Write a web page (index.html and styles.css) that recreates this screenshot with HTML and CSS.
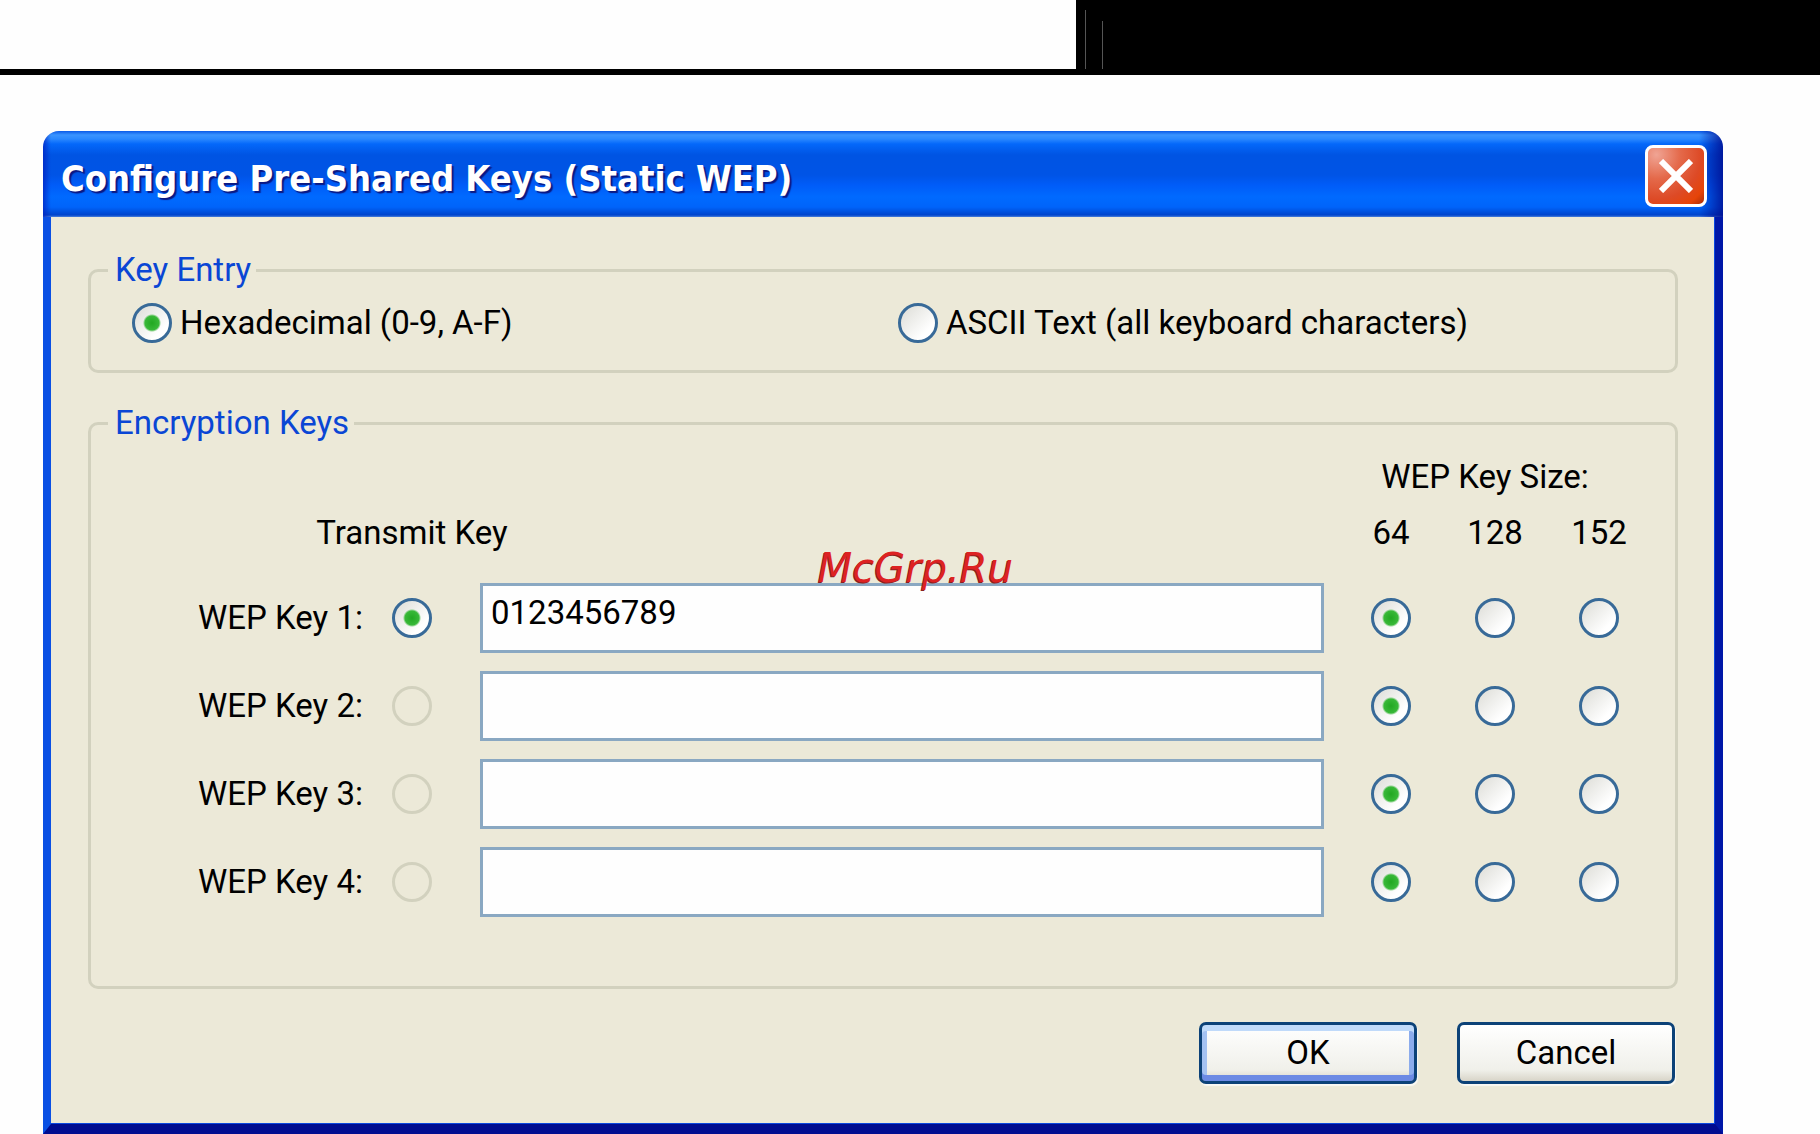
FILE: index.html
```html
<!DOCTYPE html>
<html lang="en">

<head>
    <meta charset="utf-8">
    <title>Configure Pre-Shared Keys (Static WEP)</title>
    <meta name="viewport" content="width=device-width, initial-scale=1.0" />
    <link rel="stylesheet" href="styles.css">
</head>

<body>
    <header class="page-head">
        <div class="page-tab"><span class="rule"></span><span class="rule short"></span></div>
    </header>

    <form class="dialog">
        <div class="titlebar">
            <h1>Configure Pre-Shared Keys (Static WEP)</h1>
            <button type="button" class="close" aria-label="Close">
                <svg viewBox="0 0 34 34" width="34" height="34">
                    <path d="M2 2 L32 32 M32 2 L2 32" stroke="#fff" stroke-width="6" fill="none" />
                </svg>
            </button>
        </div>

        <div class="content">
            <fieldset class="entry">
                <legend>Key Entry</legend>
                <label><input type="radio" name="entry" checked>Hexadecimal (0-9, A-F)</label>
                <label><input type="radio" name="entry">ASCII Text (all keyboard characters)</label>
            </fieldset>

            <fieldset class="keys">
                <legend>Encryption Keys</legend>
                <div class="row head">
                    <span class="size-title">WEP Key Size:</span>
                </div>
                <div class="row head">
                    <span class="transmit">Transmit Key</span>
                    <span class="size first">64</span>
                    <span class="size">128</span>
                    <span class="size">152</span>
                </div>
                <div class="row">
                    <label for="key1">WEP Key 1:</label>
                    <input type="radio" name="transmit" aria-label="Transmit key 1" checked>
                    <input type="text" id="key1" value="0123456789">
                    <input type="radio" name="size1" aria-label="64" checked>
                    <input type="radio" name="size1" aria-label="128">
                    <input type="radio" name="size1" aria-label="152">
                </div>
                <div class="row">
                    <label for="key2">WEP Key 2:</label>
                    <input type="radio" name="transmit" aria-label="Transmit key 2" disabled>
                    <input type="text" id="key2">
                    <input type="radio" name="size2" aria-label="64" checked>
                    <input type="radio" name="size2" aria-label="128">
                    <input type="radio" name="size2" aria-label="152">
                </div>
                <div class="row">
                    <label for="key3">WEP Key 3:</label>
                    <input type="radio" name="transmit" aria-label="Transmit key 3" disabled>
                    <input type="text" id="key3">
                    <input type="radio" name="size3" aria-label="64" checked>
                    <input type="radio" name="size3" aria-label="128">
                    <input type="radio" name="size3" aria-label="152">
                </div>
                <div class="row">
                    <label for="key4">WEP Key 4:</label>
                    <input type="radio" name="transmit" aria-label="Transmit key 4" disabled>
                    <input type="text" id="key4">
                    <input type="radio" name="size4" aria-label="64" checked>
                    <input type="radio" name="size4" aria-label="128">
                    <input type="radio" name="size4" aria-label="152">
                </div>
            </fieldset>

            <div class="buttons">
                <button type="submit" class="default">OK</button>
                <button type="button">Cancel</button>
            </div>
        </div>
        <span class="watermark">McGrp.Ru</span>
    </form>
</body>

</html>
```

FILE: styles.css
```css
* {
    box-sizing: border-box;
}

body {
    margin: 0;
    background-color: #fefefe;
    color: #000;
    font-family: Roboto, "Liberation Sans", sans-serif;
    font-size: 33px;
    line-height: 40px;
}

/* page header */
.page-head {
    height: 75px;
    border-bottom: 6px solid #000;
    display: flex;
    justify-content: flex-end;
}

.page-tab {
    width: 40.9%;
    background-color: #000;
    display: flex;
    align-items: flex-end;
    gap: 16px;
    padding-left: 9px;
}

.rule {
    width: 1px;
    height: 59px;
    background-color: #555;
}

.rule.short {
    height: 48px;
}

/* window */
.dialog {
    position: relative;
    margin: 56px 97px 0 43px;
}

.titlebar {
    height: 86px;
    display: flex;
    align-items: center;
    justify-content: space-between;
    padding: 4px 16px 0 18px;
    border-radius: 16px 16px 0 0;
    background:
        linear-gradient(to right, rgba(0, 30, 190, .7), transparent 8px, transparent calc(100% - 24px), rgba(0, 10, 140, .8)),
        linear-gradient(#0a5ae8 0, #3a94ff 4px, #2a88ff 8px, #0468fa 13px, #0054e3 24px, #0054e6 44px, #005cf8 54px, #006aff 66px, #0064fa 76px, #0044cc 84px, #4a80dc 86px);
}

h1 {
    margin: 0;
    padding-top: 6px;
    color: #fff;
    font-family: "DejaVu Sans Condensed", sans-serif;
    font-size: 36px;
    font-weight: bold;
    text-shadow: 2px 2px 1px #0a1883;
}

.close {
    width: 62px;
    height: 62px;
    padding: 0;
    display: flex;
    align-items: center;
    justify-content: center;
    border: 3px solid #fff;
    border-radius: 8px;
    background: radial-gradient(circle at 15% 12%, #f0a494 0, #e4694a 35%, #dd4a26 65%, #e64408 85%, #a82c08 100%);
}

.content {
    padding: 33px 37px 40px;
    border-style: solid;
    border-width: 0 8px 10px 8px;
    border-color: #0020b8 #0018a8 #000c90 #0a50e4;
    background-color: #ece9d8;
    box-shadow: inset 0 -1px 0 #0a48e0, inset -1px 0 0 #0a48e0;
}

fieldset {
    min-width: 0;
    margin: 0;
    border: 3px solid #d2d1be;
    border-radius: 10px;
}

legend {
    margin-left: 17px;
    padding: 0 5px 0 7px;
    color: #0a46d5;
}

.entry {
    display: grid;
    grid-template-columns: 1fr 1fr;
    padding: 13px 52px 27px 0;
}

.entry label {
    display: flex;
    align-items: center;
    gap: 8px;
    margin-left: 41px;
    margin-right: -41px;
}

.keys {
    margin-top: 30px;
    padding: 14px 24px 69px 0;
}

.row {
    display: grid;
    grid-template-columns: 194px 40px 1fr 104px 104px 104px;
    align-items: center;
    justify-items: center;
    margin: 0 0 18px 107px;
}

.row:last-child {
    margin-bottom: 0;
}

.row label {
    justify-self: start;
}

.row.head {
    margin-bottom: 16px;
}

.row.head + .row:not(.head) {
    margin-top: 30px;
}

.size-title {
    grid-column: 4 / 7;
    padding-right: 20px;
}

.transmit {
    grid-column: 2;
    white-space: nowrap;
}

.size.first {
    grid-column: 4;
}

input[type="text"] {
    justify-self: stretch;
    min-width: 0;
    height: 70px;
    margin: 0 15px 0 48px;
    padding: 0 8px 12px;
    border: 3px solid #8aa8c2;
    background-color: #fefefe;
    color: #000;
    font: inherit;
}

input[type="radio"] {
    appearance: none;
    flex: none;
    width: 40px;
    height: 40px;
    margin: 0;
    border: 3px solid #386a98;
    border-radius: 50%;
    background: linear-gradient(135deg, #dcdcd6, #fff 75%);
}

input[type="radio"]:checked {
    background:
        radial-gradient(circle, #22a822 0, #38b838 7px, transparent 9px),
        linear-gradient(135deg, #dcdcd6, #fff 75%);
}

input[type="radio"]:disabled {
    border-color: #d2d1be;
    background: none;
}

.buttons {
    display: flex;
    justify-content: flex-end;
    gap: 40px;
    margin: 33px 3px 0;
}

.buttons button {
    width: 218px;
    height: 62px;
    padding: 0;
    border: 3px solid #0c4278;
    border-radius: 7px;
    background: linear-gradient(#fff, #f0f0ea 80%, #d8d4c8);
    box-shadow: 1px 2px 1px #faf9f4;
    color: #000;
    font: inherit;
}

.buttons .default {
    box-shadow: inset 0 6px 0 #c0dafa, inset 0 -6px 0 #6c8ae4, inset 5px 0 0 #a4c2f2, inset -5px 0 0 #8cacec, 1px 2px 1px #faf9f4;
}

/* stamped over the form */
.watermark {
    position: absolute;
    top: 417px;
    left: 46%;
    padding-left: 2px;
    color: #dd2222;
    font: italic 40px/40px "DejaVu Sans", sans-serif;
    text-shadow: -1px 1px 0 #8a2020;
}
```
